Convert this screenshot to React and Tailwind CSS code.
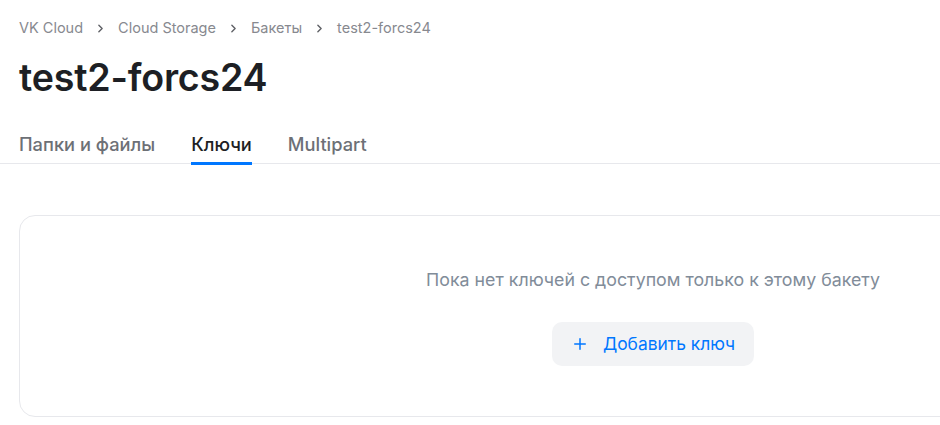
import React from 'react';
import { ChevronRight, Plus } from 'lucide-react';

const crumbs = ['VK Cloud', 'Cloud Storage', 'Бакеты', 'test2-forcs24'];
const tabs = ['Папки и файлы', 'Ключи', 'Multipart'];

export default function App() {
  return (
    <div className="w-[940px] h-[425px] overflow-hidden bg-white font-['Inter',sans-serif]">
      <div className="w-[1306px]">
        {/* Breadcrumbs */}
        <div className="flex items-center gap-[11px] pl-[19px] pt-[18px] text-[14.5px] leading-[20px] text-[#87898f]">
          {crumbs.map((c, i) => (
            <React.Fragment key={c}>
              {i > 0 && <ChevronRight className="w-[13px] h-[13px] text-[#5f6166]" strokeWidth={2.6} />}
              <span>{c}</span>
            </React.Fragment>
          ))}
        </div>

        {/* Title */}
        <h1 className="pl-[19px] mt-[18px] text-[37.6px] leading-[44px] font-semibold text-[#1d1f24] tracking-[-0.2px]">
          test2-forcs24
        </h1>

        {/* Tabs */}
        <div className="mt-[32px] flex gap-[36px] pl-[19px] border-b border-[#e7e8ec]">
          {tabs.map((t, i) => (
            <div
              key={t}
              className={
                i === 1
                  ? 'pb-[6px] text-[18.3px] leading-[24px] font-medium text-[#1d1f24] border-b-[3px] border-[#0077ff] -mb-[2px]'
                  : 'pb-[6px] text-[18.3px] leading-[24px] font-medium text-[#6d7076] border-b-[3px] border-transparent -mb-[2px]'
              }
            >
              {t}
            </div>
          ))}
        </div>

        {/* Empty state card */}
        <div className="mx-[19px] mt-[51px] h-[202px] rounded-[16px] border border-[#e7e8ec] flex flex-col items-center pt-[52px]">
          <p className="text-[17.8px] leading-[24px] text-[#818c99]">
            Пока нет ключей с доступом только к этому бакету
          </p>
          <button className="mt-[30px] h-[44px] px-[19px] rounded-[10px] bg-[#f2f3f5] flex items-center gap-[14px] text-[17.4px] text-[#0077ff]">
            <Plus className="w-[18px] h-[18px]" strokeWidth={2} />
            Добавить ключ
          </button>
        </div>
      </div>
    </div>
  );
}
